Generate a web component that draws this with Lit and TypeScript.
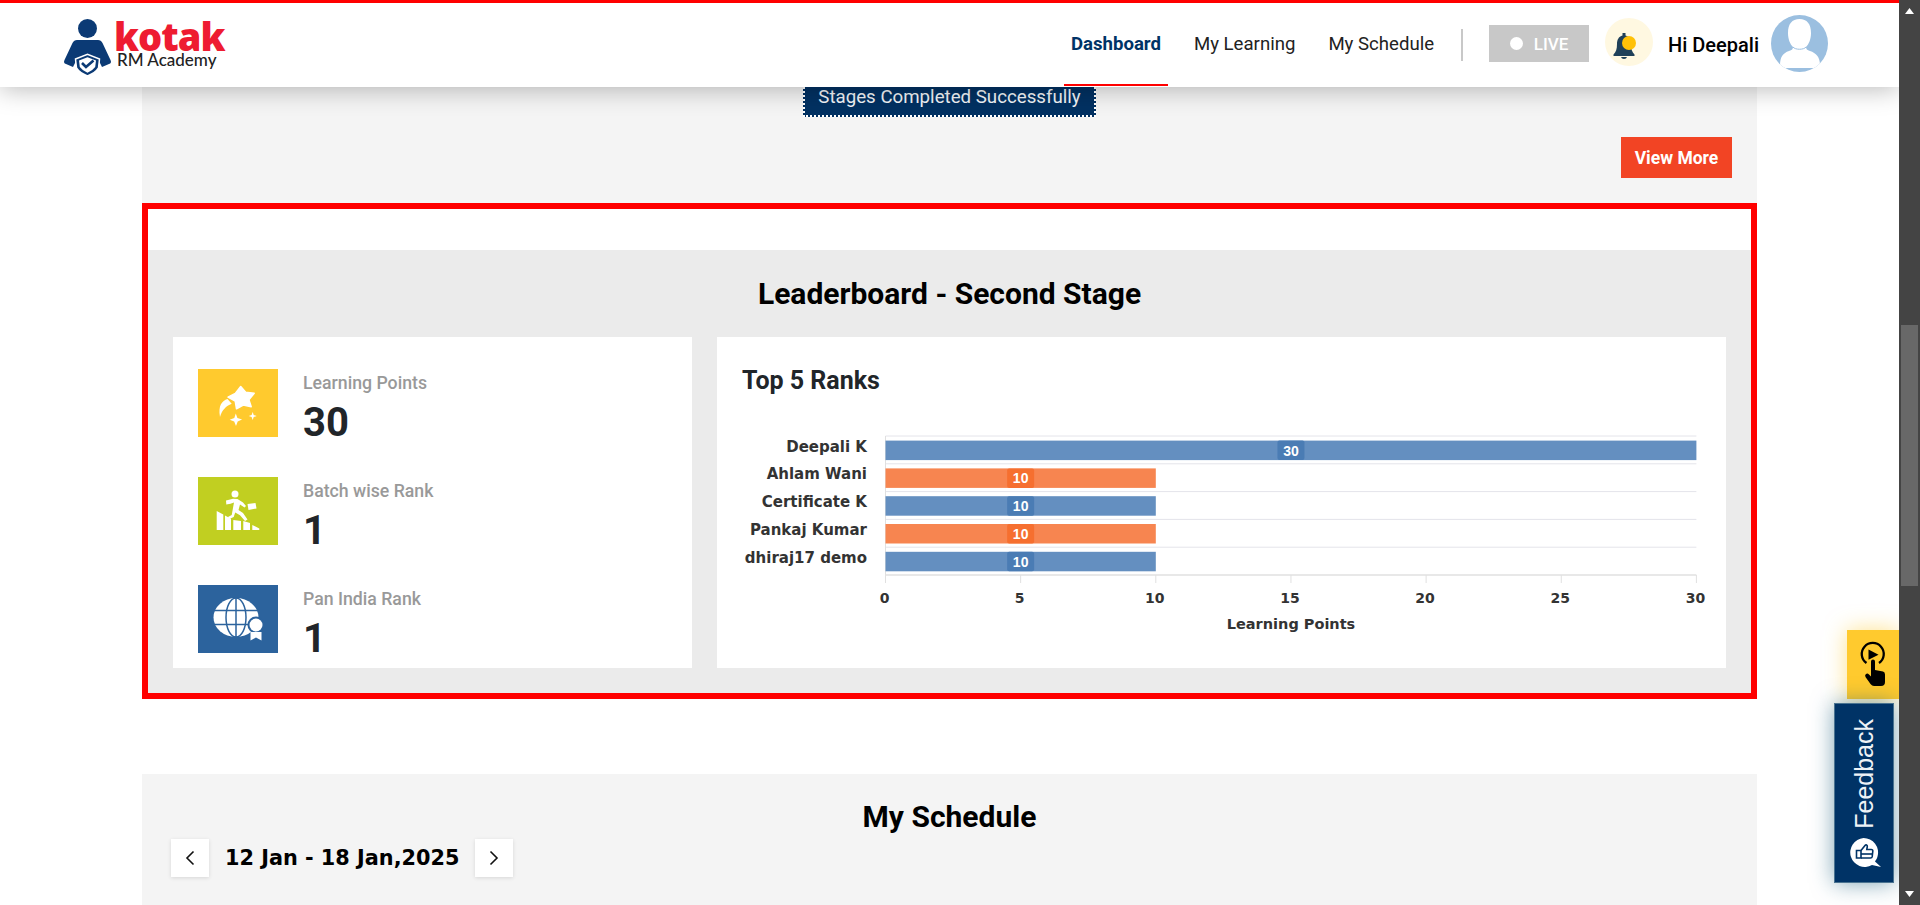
import { LitElement, html, css, svg } from 'lit';
import { customElement } from 'lit/decorators.js';

const ranks = [
  { name: 'Deepali K', points: 30, bar: '#648fc0', badge: '#4a7cb4' },
  { name: 'Ahlam Wani', points: 10, bar: '#f78550', badge: '#f66f2f' },
  { name: 'Certificate K', points: 10, bar: '#648fc0', badge: '#4a7cb4' },
  { name: 'Pankaj Kumar', points: 10, bar: '#f78550', badge: '#f66f2f' },
  { name: 'dhiraj17 demo', points: 10, bar: '#648fc0', badge: '#4a7cb4' },
];

const X0 = 168.5;
const UNIT = 27.03;
const ROW = 27.8;
const TOP = 16;

const starIcon = html`<svg width="80" height="68" viewBox="0 0 80 68">
  <path fill="#fff" stroke="#fff" stroke-width="1.500" stroke-linejoin="round" d="M42.700 17.500l5 5.800 8.500.9-5.300 6.500 2.300 7-8 -1.700-6.700 3.800-1.300-7.800-7.200-3.900 7.300-3.700z"/>
  <path fill="#fff" d="M22 48C20 36 24 32 29.500 30l4.200 4.700C28 37 24 41 22 48z"/>
  <path fill="#fff" d="M37.800 44.500l1.600 4.600 4.700 1.500-4.400 2-1.700 4.400-1.800-4.400-4.500-1.800 4.600-1.700zM54.700 43l1 2.900 3 1-3 1.100-1 3-1.100-3-2.900-1.100 2.900-1z"/>
</svg>`;

const runnerIcon = html`<svg width="80" height="68" viewBox="0 0 80 68">
  <path fill="#fff" d="M18.700 34l6.600 3.500V53h-6.600zM27 38.500l6 3.300V53h-6zM35.300 43l7.700 1v9h-7.700zM45.300 44l6.700 2v7h-6.700zM54.300 48l7 3.500V53h-7z"/>
  <circle fill="#fff" cx="37" cy="17" r="3.500"/>
  <path fill="#fff" d="M28 23.500l7-1.800 4.500.3 5.500 3.500 3 3.500-1.500 1.500-4.500-3-1.500 5.500 4.500 3 4.500 6.500-2.500 1.500-5-5.800-4.800-2.700-1.500 4.500-4.800 2.200-.9-2.200 3.700-2 1.700-9.200.6-3.300-3.500 1.300-4.200.6z"/>
  <path fill="#fff" d="M49.500 27l8-1 1 5.500-8 1.500z"/>
</svg>`;

const globeIcon = html`<svg width="80" height="68" viewBox="0 0 80 68">
  <ellipse cx="38" cy="32.500" rx="22.500" ry="19.500" fill="#fff"/>
  <g fill="none" stroke="#2c639d" stroke-width="1.500">
    <ellipse cx="38" cy="32.500" rx="10" ry="19.500"/>
    <path d="M38 13v39M15 25.500h46M15 39.500h41"/>
  </g>
  <circle cx="58" cy="40" r="8.500" fill="#2c639d"/>
  <circle cx="58" cy="40" r="6.500" fill="#fff"/>
  <path fill="#fff" d="M52.500 47h11v8.500l-5.500-3-5.500 3z"/>
</svg>`;

@customElement('app-root')
export class AppRoot extends LitElement {
  static styles = css`
    :host {
      display: block;
      position: relative;
      height: 905px;
      overflow: hidden;
      background: #fff;
      font-family: Roboto, sans-serif;
    }

    .page {
      width: 1899px;
      padding: 0 142px;
      box-sizing: border-box;
    }

    .header {
      position: absolute;
      top: 0;
      left: 0;
      width: 1899px;
      height: 87px;
      box-sizing: border-box;
      border-top: 3px solid #f00;
      background: #fff;
      box-shadow: 0 2px 24px rgba(0, 0, 0, 0.28);
      display: flex;
      align-items: stretch;
      justify-content: space-between;
      padding: 0 71px 0 62px;
      z-index: 2;
    }

    .logo {
      display: flex;
      align-items: center;
      height: 84px;
    }
    .logo svg {
      display: block;
      margin-top: 3px;
    }
    .logo-text {
      display: flex;
      flex-direction: column;
      margin: -2px 0 0 0;
    }
    .kotak {
      font-family: 'Open Sans', sans-serif;
      font-weight: 800;
      font-size: 38px;
      line-height: 32px;
      height: 30px;
      letter-spacing: -1px;
      color: #ee1c31;
    }
    .academy {
      font-family: Lato, sans-serif;
      font-weight: 500;
      font-size: 17px;
      line-height: 19px;
      color: #222;
      margin-left: 3px;
    }

    .right {
      display: flex;
      align-items: center;
    }
    .nav {
      display: flex;
      gap: 19px;
      height: 84px;
    }
    .nav a {
      display: flex;
      align-items: center;
      box-sizing: border-box;
      height: 83px;
      padding: 0 7px;
      font-size: 18.600px;
      color: #222;
      border-bottom: 2px solid transparent;
    }
    .nav a.active {
      color: #003366;
      font-weight: 700;
      border-bottom-color: #f00;
    }
    .divider {
      width: 2px;
      height: 32px;
      background: #c8c8c8;
      margin: 0 26px 0 20px;
    }
    .live {
      display: flex;
      align-items: center;
      justify-content: center;
      gap: 11px;
      width: 100px;
      height: 37px;
      margin-top: -3px;
      background: #c8c8c8;
      color: #fff;
      font-size: 17px;
      font-weight: 500;
    }
    .live i {
      width: 13px;
      height: 13px;
      border-radius: 50%;
      background: #fff;
    }
    .bell {
      width: 48px;
      height: 48px;
      border-radius: 50%;
      background: #fff8e1;
      margin: -7px 0 0 16px;
      display: flex;
      align-items: center;
      justify-content: center;
    }
    .bell svg {
      margin: 8px 10px 0 0;
    }
    .hi {
      margin: 0 12px 0 15px;
      font-size: 20px;
      font-weight: 500;
      color: #000;
    }
    .avatar {
      display: block;
      margin-top: -3px;
    }

    .top {
      height: 203px;
      box-sizing: border-box;
      background: #f4f4f4;
      padding-top: 62px;
      display: flex;
      flex-direction: column;
    }
    .stage {
      align-self: center;
      box-sizing: border-box;
      width: 293px;
      height: 55px;
      padding-bottom: 7px;
      border: 2px dotted #fff;
      background: #023162;
      color: #f2f5f8;
      font-size: 18.700px;
      display: flex;
      align-items: flex-end;
      justify-content: center;
    }
    .more {
      align-self: flex-end;
      margin: 20px 25px 0 0;
      width: 111px;
      height: 41px;
      background: #f24424;
      color: #fff;
      font-size: 17.500px;
      font-weight: 700;
      display: flex;
      align-items: center;
      justify-content: center;
    }

    .board {
      box-sizing: border-box;
      height: 496px;
      border: 6px solid #f00;
      padding-top: 41px;
    }
    .board-inner {
      background: #ebebeb;
      height: 443px;
      box-sizing: border-box;
      padding: 0 25px 25px;
      display: flex;
      flex-direction: column;
    }
    h2 {
      margin: 0;
      font-size: 30px;
      font-weight: 700;
      color: #000;
      text-align: center;
    }
    .board-inner h2 {
      height: 87px;
      line-height: 87px;
    }
    .cards {
      flex: 1;
      display: flex;
      gap: 25px;
    }
    .stats {
      width: 519px;
      box-sizing: border-box;
      background: #fff;
      padding: 32px 25px 0;
      display: flex;
      flex-direction: column;
      gap: 40px;
    }
    .stat {
      display: flex;
      gap: 25px;
      height: 68px;
    }
    .tile {
      width: 80px;
      height: 68px;
    }
    .tile svg {
      display: block;
    }
    .label {
      font-size: 17.700px;
      font-weight: 500;
      line-height: 20px;
      margin-top: 4px;
      color: #999;
    }
    .value {
      font-size: 40px;
      font-weight: 700;
      line-height: 46px;
      color: #212529;
      margin-top: 7px;
    }
    .ranks {
      flex: 1;
      background: #fff;
    }
    .ranks h3 {
      margin: 0;
      padding: 29px 25px 0;
      height: 83px;
      box-sizing: border-box;
      font-size: 25px;
      line-height: 29px;
      font-weight: 700;
      color: #212529;
    }
    .ranks svg {
      display: block;
    }
    .ylabel {
      font-family: 'DejaVu Sans', sans-serif;
      font-size: 15px;
      font-weight: 700;
      fill: #333;
      text-anchor: end;
    }
    .tick {
      font-family: 'DejaVu Sans', sans-serif;
      font-size: 14px;
      font-weight: 700;
      fill: #333;
      text-anchor: middle;
    }
    .axis-title {
      font-size: 14.500px;
    }
    .inbar {
      font-family: 'Liberation Sans', sans-serif;
      font-size: 14px;
      font-weight: 700;
      fill: #fff;
      text-anchor: middle;
    }

    .schedule {
      margin-top: 75px;
      height: 131px;
      background: #f4f4f4;
      padding: 0 29px;
      box-sizing: content-box;
    }
    .schedule h2 {
      padding-top: 26px;
      line-height: 34px;
    }
    .week {
      display: flex;
      align-items: center;
      margin-top: 5px;
    }
    .arrow {
      height: 38px;
      width: 38px;
      background: #fff;
      box-shadow: 0 1px 4px rgba(0, 0, 0, 0.12);
      display: flex;
      align-items: center;
      justify-content: center;
    }
    .range {
      margin: 0 16px;
      font-family: 'DejaVu Sans', sans-serif;
      font-size: 20.800px;
      font-weight: 700;
      color: #000;
    }

    .scrollbar {
      position: absolute;
      top: 0;
      right: 0;
      width: 21px;
      height: 905px;
      background: #444;
      z-index: 3;
    }
    .thumb {
      position: absolute;
      top: 325px;
      left: 2px;
      width: 17px;
      height: 261px;
      background: #686868;
    }
    .scrollbar svg {
      position: absolute;
      left: 5px;
    }

    .demo {
      position: absolute;
      top: 630px;
      left: 1847px;
      width: 52px;
      height: 69px;
      background: #ffca2e;
      box-shadow: 0 0 22px rgba(255, 202, 46, 0.55);
      z-index: 1;
    }
    .feedback {
      position: absolute;
      top: 703px;
      left: 1834px;
      width: 60px;
      height: 180px;
      box-sizing: border-box;
      background: #003366;
      box-shadow: 0 0 22px rgba(20, 90, 120, 0.55);
      border: 1px solid #4a7390;
      display: flex;
      flex-direction: column;
      align-items: center;
      padding-top: 15px;
      z-index: 1;
    }
    .feedback span {
      writing-mode: vertical-rl;
      transform: rotate(180deg);
      font-family: 'Liberation Sans', sans-serif;
      font-size: 25px;
      line-height: 28px;
      color: #eef2f6;
    }
    .feedback svg {
      display: block;
      margin: 6px 0 0 3px;
    }
  `;

  renderChart() {
    const ticks = [0, 5, 10, 15, 20, 25, 30];
    const bottom = TOP + ROW * ranks.length;
    return html`<svg width="1009" height="228" viewBox="0 0 1009 228">
      ${ranks.map((_, i) => svg`<line x1=${X0} x2=${X0 + UNIT * 30} y1=${TOP + ROW * i} y2=${TOP + ROW * i} stroke="#e4e4ea"/>`)}
      <line x1=${X0} x2=${X0 + UNIT * 30} y1=${bottom} y2=${bottom} stroke="#e0e0e0" stroke-width="1.500"/>
      <line x1=${X0} x2=${X0} y1=${TOP} y2=${bottom + 8} stroke="#e0e0e0"/>
      ${ticks.map((t) => svg`
        <line x1=${X0 + UNIT * t} x2=${X0 + UNIT * t} y1=${bottom} y2=${bottom + 8} stroke="#e0e0e0"/>
        <text class="tick" x=${X0 + UNIT * t - 1} y=${bottom + 28}>${t}</text>`)}
      ${ranks.map((r, i) => {
        const y = TOP + ROW * i + 4.6;
        const w = r.points * UNIT;
        return svg`
          <text class="ylabel" x="150" y=${y + 11}>${r.name}</text>
          <rect x=${X0} y=${y} width=${w} height="19.500" fill=${r.bar}/>
          <rect x=${X0 + w / 2 - 13.500} y=${y} width="27" height="19.500" rx="2" fill=${r.badge}/>
          <text class="inbar" x=${X0 + w / 2} y=${y + 15}>${r.points}</text>`;
      })}
      <text class="tick axis-title" x="574" y="209">Learning Points</text>
    </svg>`;
  }

  render() {
    return html`
      <header class="header">
        <div class="logo">
          <svg width="52" height="60" viewBox="0 0 52 60">
            <circle cx="25.500" cy="11.500" r="9.500" fill="#0b3a75"/>
            <path fill="#0b3a75" d="M15 23h21q3 0 4.500 3l8 17q1.500 3-1.500 4l-7 3-4-8-10.500-4-10.500 4-4 8-7-3q-3-1-1.500-4l8-17q1.500-3 4.500-3z"/>
            <path fill="#0b3a75" stroke="#fff" stroke-width="1.500" d="M13.500 42l12-4.800 12 4.800-1 9q-3 5-11 8-8-3-11-8z"/>
            <path fill="#fff" d="M17 43.500l8.500-3.300 8.500 3.300-.8 6.500q-2.500 3.500-7.700 5.700-5.200-2.200-7.700-5.700z"/>
            <path fill="none" stroke="#0b3a75" stroke-width="2.600" d="M20 46l4 4 7.500-6.500"/>
          </svg>
          <div class="logo-text">
            <span class="kotak">kotak</span>
            <span class="academy">RM Academy</span>
          </div>
        </div>
        <div class="right">
          <nav class="nav">
            <a class="active">Dashboard</a>
            <a>My Learning</a>
            <a>My Schedule</a>
          </nav>
          <div class="divider"></div>
          <div class="live"><i></i>LIVE</div>
          <div class="bell">
            <svg width="26" height="26" viewBox="0 0 26 26">
              <path fill="#1f4058" d="M11.500 0h3v2.500c4 1 5.500 4.500 5.500 8.500 0 5 1 8 3.500 10.500V23h-21v-1.500C5 19 6 16 6 11c0-4 1.500-7.500 5.500-8.500z"/>
              <path fill="#1f4058" d="M10 24h6q-.5 2-3 2t-3-2z"/>
              <circle cx="18" cy="10" r="7" fill="#ffc107"/>
            </svg>
          </div>
          <div class="hi">Hi Deepali</div>
          <svg class="avatar" width="57" height="57" viewBox="0 0 57 57">
            <clipPath id="av"><circle cx="28.500" cy="28.500" r="28.500"/></clipPath>
            <circle cx="28.500" cy="28.500" r="28.500" fill="#9bbfe0"/>
            <g clip-path="url(#av)">
              <path fill="#fff" d="M9 50c0-8 3-12 9-14 3-1 4-2 4-4-3-3-5-8-5-14 0-9 4-14 11.500-14S40 9 40 18c0 6-2 11-5 14 0 2 1 3 4 4 6 2 10 6 10 14v3H9z"/>
              <path fill="none" stroke="#9bbfe0" stroke-width="1" d="M22 32c2 3 11 3 13 0"/>
            </g>
          </svg>
        </div>
      </header>

      <div class="page">
        <section class="top">
          <div class="stage">Stages Completed Successfully</div>
          <div class="more">View More</div>
        </section>

        <section class="board">
          <div class="board-inner">
            <h2>Leaderboard - Second Stage</h2>
            <div class="cards">
              <div class="stats">
                <div class="stat">
                  <div class="tile" style="background:#ffca2e">${starIcon}</div>
                  <div><div class="label">Learning Points</div><div class="value">30</div></div>
                </div>
                <div class="stat">
                  <div class="tile" style="background:#c1cf21">${runnerIcon}</div>
                  <div><div class="label">Batch wise Rank</div><div class="value">1</div></div>
                </div>
                <div class="stat">
                  <div class="tile" style="background:#2c639d">${globeIcon}</div>
                  <div><div class="label">Pan India Rank</div><div class="value">1</div></div>
                </div>
              </div>
              <div class="ranks">
                <h3>Top 5 Ranks</h3>
                ${this.renderChart()}
              </div>
            </div>
          </div>
        </section>

        <section class="schedule">
          <h2>My Schedule</h2>
          <div class="week">
            <div class="arrow">
              <svg width="12" height="16" viewBox="0 0 12 16"><path fill="none" stroke="#111" stroke-width="1.600" d="M9.500 1.500L3 8l6.500 6.500"/></svg>
            </div>
            <div class="range">12 Jan - 18 Jan,2025</div>
            <div class="arrow">
              <svg width="12" height="16" viewBox="0 0 12 16"><path fill="none" stroke="#111" stroke-width="1.600" d="M2.500 1.500L9 8l-6.500 6.500"/></svg>
            </div>
          </div>
        </section>
      </div>

      <div class="demo">
        <svg width="52" height="69" viewBox="0 0 52 69">
          <path fill="none" stroke="#000" stroke-width="2.300" d="M19.500 33a11 11 0 1 1 12.500 0"/>
          <path d="M21.500 19.500l10 5.200-10 5z"/>
          <path d="M24 31.500a2 2 0 0 1 4 0V40l8 1.500q2 .5 2 3V52q0 4-4 4h-7q-2 0-3.500-2l-5-7q-1-2 .5-3t3 .5l2 2z"/>
        </svg>
      </div>

      <div class="feedback">
        <span>Feedback</span>
        <svg width="36" height="36" viewBox="0 0 36 36">
          <path fill="#fff" d="M15.500 3a14.500 14.500 0 0 1 14 18.500c-.5 2-1.500 3.500-2.500 5l6 5.500-9-2a14.500 14.500 0 1 1-8.500-27z"/>
          <g fill="none" stroke="#003366" stroke-width="1.600">
            <path d="M8.500 15.500h4.500V23H8.500z"/>
            <path d="M13 15.500l4-5c1-1.200 2.500-.5 2.300 1l-.5 3h4.500q1.700 0 1.500 1.700l-.6 5.500q-.2 1.300-1.700 1.300H13"/>
            <path d="M13 19h12"/>
          </g>
        </svg>
      </div>

      <div class="scrollbar">
        <svg style="top:7px" width="11" height="8" viewBox="0 0 11 8"><path fill="#fff" d="M5.500 1l4.500 6H1z"/></svg>
        <div class="thumb"></div>
        <svg style="bottom:7px" width="11" height="8" viewBox="0 0 11 8"><path fill="#fff" d="M5.500 7L1 1h9z"/></svg>
      </div>
    `;
  }
}
